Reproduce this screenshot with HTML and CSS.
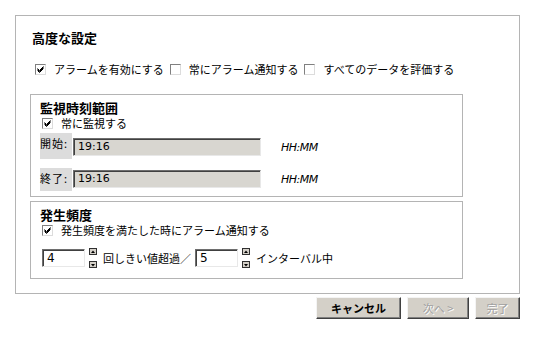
FILE: index.html
```html
<!DOCTYPE html>
<html lang="ja">
<head>
<meta charset="utf-8">
<link rel="stylesheet" href="styles.css">
</head>
<body>
<div class="panel">
  <div class="title">高度な設定</div>
  <div class="opts">
    <span class="cb on"><svg viewBox="0 0 9 9" width="9" height="9"><path d="M1.5 3.5 L3.5 5.5 L7.5 1.5 M1.5 4.5 L3.5 6.5 L7.5 2.5 M1.5 5.5 L3.5 7.5 L7.5 3.5" stroke="#000" stroke-width="1" fill="none"/></svg></span>
    <span class="lbl">アラームを有効にする</span>
    <span class="cb"></span>
    <span class="lbl">常にアラーム通知する</span>
    <span class="cb"></span>
    <span class="lbl">すべてのデータを評価する</span>
  </div>

  <div class="group g1">
    <div class="ghead">監視時刻範囲</div>
    <div class="crow">
      <span class="cb on"><svg viewBox="0 0 9 9" width="9" height="9"><path d="M1.5 3.5 L3.5 5.5 L7.5 1.5 M1.5 4.5 L3.5 6.5 L7.5 2.5 M1.5 5.5 L3.5 7.5 L7.5 3.5" stroke="#000" stroke-width="1" fill="none"/></svg></span>
      <span class="lbl">常に監視する</span>
    </div>
    <div class="trow r1">
      <span class="tlabel">開始:</span>
      <span class="tinput">19:16</span>
      <span class="fmt">HH:MM</span>
    </div>
    <div class="trow r2">
      <span class="tlabel">終了:</span>
      <span class="tinput">19:16</span>
      <span class="fmt">HH:MM</span>
    </div>
  </div>

  <div class="group g2">
    <div class="ghead">発生頻度</div>
    <div class="crow">
      <span class="cb on"><svg viewBox="0 0 9 9" width="9" height="9"><path d="M1.5 3.5 L3.5 5.5 L7.5 1.5 M1.5 4.5 L3.5 6.5 L7.5 2.5 M1.5 5.5 L3.5 7.5 L7.5 3.5" stroke="#000" stroke-width="1" fill="none"/></svg></span>
      <span class="lbl">発生頻度を満たした時にアラーム通知する</span>
    </div>
    <div class="srow">
      <span class="ninput">4</span>
      <span class="spin"><span class="sb"><svg viewBox="0 0 6 6" width="6" height="6"><path d="M1 4 L3 1.5 L5 4 Z" fill="#000"/></svg></span><span class="sb"><svg viewBox="0 0 6 6" width="6" height="6"><path d="M1 2 L3 4.5 L5 2 Z" fill="#000"/></svg></span></span>
      <span class="lbl t1">回しきい値超過／</span>
      <span class="ninput">5</span>
      <span class="spin"><span class="sb"><svg viewBox="0 0 6 6" width="6" height="6"><path d="M1 4 L3 1.5 L5 4 Z" fill="#000"/></svg></span><span class="sb"><svg viewBox="0 0 6 6" width="6" height="6"><path d="M1 2 L3 4.5 L5 2 Z" fill="#000"/></svg></span></span>
      <span class="lbl t2">インターバル中</span>
    </div>
  </div>
</div>
<div class="buttons">
  <span class="btn cancel">キャンセル</span>
  <span class="btn dis next">次へ &gt;</span>
  <span class="btn dis done">完了</span>
</div>
</body>
</html>
```

FILE: styles.css
```css
html, body {
  margin: 0;
  padding: 0;
  background: #fff;
}
body {
  width: 535px;
  height: 344px;
  font-family: "Noto Sans CJK JP", "DejaVu Sans", sans-serif;
  font-size: 11px;
  color: #000;
  padding-top: 15px;
  box-sizing: border-box;
  overflow: hidden;
}
.panel {
  margin-left: 15px;
  width: 505px;
  height: 279px;
  box-sizing: border-box;
  border: 1px solid #b4b4b4;
  padding: 0 0 0 14px;
}
.title {
  font-size: 13px;
  font-weight: bold;
  height: 14px;
  line-height: 14px;
  margin-top: 15px;
  padding-left: 2px;
}
.opts {
  display: flex;
  align-items: center;
  height: 14px;
  margin-top: 17px;
  padding-left: 5px;
}
.cb {
  width: 11px;
  height: 11px;
  box-sizing: border-box;
  border: 1px solid;
  border-color: #808080 #dcdcdc #dcdcdc #808080;
  background: #fff;
  display: inline-flex;
  align-items: center;
  justify-content: center;
  flex: none;
}
.lbl {
  line-height: 14px;
  white-space: nowrap;
}
.opts .cb + .lbl { margin-left: 8px; margin-right: 6px; }
.group {
  width: 433px;
  box-sizing: border-box;
  border: 1px solid #b4b4b4;
  padding-left: 9px;
}
.g1 {
  margin-top: 18px;
  height: 103px;
}
.g2 {
  margin-top: 4px;
  height: 78px;
}
.ghead {
  font-size: 13px;
  font-weight: bold;
  height: 14px;
  line-height: 14px;
  margin-top: 6px;
}
.crow {
  display: flex;
  align-items: center;
  height: 14px;
  margin-top: 1px;
  padding-left: 2px;
}
.crow .cb + .lbl { margin-left: 8px; }
.trow {
  display: flex;
  align-items: flex-start;
}
.r1 { margin-top: 3px; height: 26px; }
.r2 { margin-top: 9px; height: 23px; }
.tlabel {
  width: 32px;
  height: 100%;
  background: #dcdcdc;
  line-height: 14px;
  padding-top: 3px;
  box-sizing: border-box;
  font-size: 11px;
  letter-spacing: 1px;
}
.tinput {
  margin-left: 1px;
  width: 188px;
  height: 18px;
  box-sizing: border-box;
  border: 1px solid;
  border-color: #6e6e6e #e8e8e8 #e8e8e8 #6e6e6e;
  box-shadow: inset 1px 1px 0 #404040;
  background: #d8d6d0;
  font-family: "DejaVu Sans", sans-serif;
  font-size: 11px;
  line-height: 16px;
  padding-left: 4px;
}
.r1 .tinput { margin-top: 5px; }
.r2 .tinput { margin-top: 2px; }
.fmt {
  margin-left: 20px;
  font-family: "DejaVu Sans", sans-serif;
  font-style: italic;
  font-size: 11px;
  letter-spacing: -0.5px;
  line-height: 14px;
}
.r1 .fmt { margin-top: 8px; }
.r2 .fmt { margin-top: 5px; }
.srow {
  display: flex;
  align-items: center;
  height: 20px;
  margin-top: 11px;
  padding-left: 2px;
}
.ninput {
  width: 43px;
  height: 18px;
  box-sizing: border-box;
  border: 1px solid;
  border-color: #6e6e6e #e8e8e8 #e8e8e8 #6e6e6e;
  box-shadow: inset 1px 1px 0 #404040;
  background: #fff;
  font-family: "DejaVu Sans", sans-serif;
  font-size: 12px;
  line-height: 16px;
  padding-left: 4px;
}
.spin {
  display: flex;
  flex-direction: column;
  justify-content: space-between;
  height: 20px;
  margin-left: 4px;
}
.sb {
  width: 8px;
  height: 7px;
  box-sizing: border-box;
  border: 1px solid #303030;
  background: #d4d0c8;
  display: flex;
  align-items: center;
  justify-content: center;
}
.t1 { margin-left: 6px; margin-right: 4px; }
.t2 { margin-left: 6px; }
.buttons {
  display: flex;
  justify-content: flex-end;
  gap: 6px;
  width: 520px;
  margin-top: 3px;
}
.btn {
  height: 22px;
  box-sizing: border-box;
  background: #d4d0c8;
  border: 1px solid;
  border-color: #f4f4f4 #404040 #404040 #f4f4f4;
  box-shadow: inset -1px -1px 0 #808080;
  display: flex;
  align-items: center;
  justify-content: center;
  font-size: 11px;
  line-height: 14px;
}
.cancel { width: 85px; font-weight: bold; }
.next { width: 62px; }
.done { width: 45px; }
.dis { color: #a0a0a0; text-shadow: 1px 1px 0 #fff; }
```
